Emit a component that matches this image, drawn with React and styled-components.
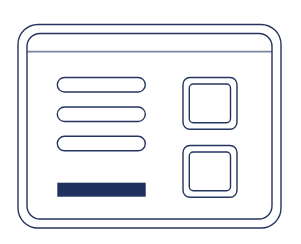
import React from 'react'
import styled, { createGlobalStyle } from 'styled-components'

const Global = createGlobalStyle`
  html, body {
    margin: 0;
    padding: 0;
    background: #ffffff;
  }
`

const Stage = styled.div`
  width: 301px;
  height: 244px;
  display: flex;
  align-items: flex-start;
  justify-content: flex-start;
`

const Drawing = styled.svg`
  display: block;
  width: 301px;
  height: 244px;
`

const ink = '#24345f'

const Line = ({ children }) => (
  <g fill="none" stroke={ink} strokeWidth="1.4">{children}</g>
)

const pills = [77.5, 107, 136.3]
const boxes = [77.5, 145.5]

export default function App() {
  return (
    <>
      <Global />
      <Stage>
        <Drawing viewBox="0 0 301 244">
          <Line>
            <rect x="18" y="24.5" width="263" height="203.5" rx="20" />
            <rect x="27" y="33.5" width="245" height="185.5" rx="13" />
            <line x1="27" y1="51.7" x2="272" y2="51.7" strokeOpacity="0.6" strokeWidth="1.8" />
            {pills.map((y) => (
              <rect key={y} x="57.3" y={y} width="88" height="14.5" rx="7.25" />
            ))}
            {boxes.map((y) => (
              <g key={y}>
                <rect x="183" y={y} width="54" height="51.8" rx="7" />
                <rect x="189.3" y={y + 6.5} width="41.2" height="38.8" rx="4" />
              </g>
            ))}
          </Line>
          <rect x="57.3" y="182.7" width="88.4" height="14" fill="#20305f" />
        </Drawing>
      </Stage>
    </>
  )
}
